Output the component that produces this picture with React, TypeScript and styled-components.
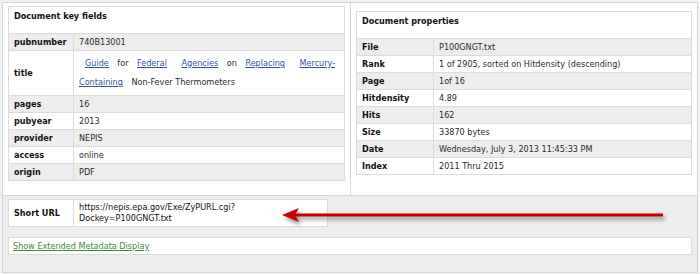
import styled, { createGlobalStyle } from "styled-components";

const GlobalStyle = createGlobalStyle`
  html, body {
    margin: 0;
    padding: 0;
    background: #f2f2f2;
  }
  body {
    font-family: "DejaVu Sans Condensed", "DejaVu Sans", sans-serif;
    font-size: 9px;
    color: #2b2b2b;
  }
`;

interface Row {
  label: string;
  value: React.ReactNode;
}

const Frame = styled.div`
  margin: 2px;
  width: 694px;
  border: 1px solid #d6d6d6;
  background: #ededed;
`;

const TopRow = styled.div`
  display: grid;
  grid-template-columns: 348px 1fr;
  height: 192px;
  background: #fff;
  border-bottom: 1px solid #d9d9d9;
`;

const Panel = styled.div<{ $padTop: number; $divider?: boolean }>`
  padding: ${({ $padTop }) => $padTop}px 5px 0;
  border-right: ${({ $divider }) => ($divider ? "1px solid #d9d9d9" : "none")};
`;

const Table = styled.table<{ $width: number }>`
  width: ${({ $width }) => $width}px;
  border-collapse: collapse;
  border: 1px solid #dcdcdc;
  background: #fff;
`;

const HeadCell = styled.td`
  height: 22px;
  padding: 4px 5px 0;
  vertical-align: top;
  font-weight: bold;
  color: #111;
  border: 1px solid #dcdcdc;
`;

const BodyRow = styled.tr<{ $shaded: boolean; $tall: boolean }>`
  background: ${({ $shaded }) => ($shaded ? "#ededed" : "#fff")};
  height: ${({ $tall }) => ($tall ? 44 : 16)}px;

  td {
    line-height: ${({ $tall }) => ($tall ? 19 : 16)}px;
    padding-top: ${({ $tall }) => ($tall ? 3 : 0)}px;
    padding-bottom: ${({ $tall }) => ($tall ? 3 : 0)}px;
  }
`;

const LabelCell = styled.td<{ $width: number }>`
  width: ${({ $width }) => $width - 10}px;
  padding: 0 5px;
  font-weight: bold;
  color: #111;
  white-space: nowrap;
  border: 1px solid #dcdcdc;
`;

const ValueCell = styled.td`
  padding: 0 5px;
  border: 1px solid #dcdcdc;
`;

const TitleLink = styled.a`
  margin: 0 6px;
  color: #2f5597;
  text-decoration: underline;
`;

const Bottom = styled.div`
  position: relative;
  padding: 3px 5px 17px;
`;

const UrlTable = styled.table`
  width: 320px;
  height: 28px;
  border-collapse: collapse;
  border: 1px solid #dcdcdc;
  background: #fff;
`;

const UrlCell = styled.td`
  padding: 0 5px;
  line-height: 11px;
  color: #111;
  border: 1px solid #dcdcdc;
`;

const ExtBox = styled.div`
  margin-top: 10px;
  height: 16px;
  padding: 0 4px;
  line-height: 16px;
  background: #fff;
  border: 1px solid #dcdcdc;
`;

const ExtLink = styled.a`
  color: #3b8b3b;
  text-decoration: underline;
`;

const Arrow = styled.svg`
  position: absolute;
  left: 275px;
  top: 8px;
  overflow: visible;
  filter: drop-shadow(2px 3px 2px rgba(0, 0, 0, 0.45));
`;

function keyRows(): Row[] {
  return [
    { label: "pubnumber", value: "740B13001" },
    {
      label: "title",
      value: (
        <>
          <TitleLink href="#">Guide</TitleLink> for <TitleLink href="#">Federal</TitleLink>{" "}
          <TitleLink href="#">Agencies</TitleLink> on <TitleLink href="#">Replacing</TitleLink>{" "}
          <TitleLink href="#">
            Mercury-
            <br />
            Containing
          </TitleLink>{" "}
          Non-Fever Thermometers
        </>
      )
    },
    { label: "pages", value: "16" },
    { label: "pubyear", value: "2013" },
    { label: "provider", value: "NEPIS" },
    { label: "access", value: "online" },
    { label: "origin", value: "PDF" }
  ];
}

const propRows: Row[] = [
  { label: "File", value: "P100GNGT.txt" },
  { label: "Rank", value: "1 of 2905, sorted on Hitdensity (descending)" },
  { label: "Page", value: "1of 16" },
  { label: "Hitdensity", value: "4.89" },
  { label: "Hits", value: "162" },
  { label: "Size", value: "33870 bytes" },
  { label: "Date", value: "Wednesday, July 3, 2013 11:45:33 PM" },
  { label: "Index", value: "2011 Thru 2015" }
];

function FieldTable({
  title,
  rows,
  width,
  labelWidth
}: {
  title: string;
  rows: Row[];
  width: number;
  labelWidth: number;
}) {
  return (
    <Table $width={width}>
      <tbody>
        <tr>
          <HeadCell colSpan={2}>{title}</HeadCell>
        </tr>
        {rows.map((row, i) => (
          <BodyRow key={row.label} $shaded={i % 2 === 0} $tall={row.label === "title"}>
            <LabelCell $width={labelWidth}>{row.label}</LabelCell>
            <ValueCell>{row.value}</ValueCell>
          </BodyRow>
        ))}
      </tbody>
    </Table>
  );
}

export default function App() {
  return (
    <>
      <GlobalStyle />
      <Frame>
        <TopRow>
          <Panel $padTop={3} $divider>
            <FieldTable title="Document key fields" rows={keyRows()} width={337} labelWidth={64} />
          </Panel>
          <Panel $padTop={8}>
            <FieldTable title="Document properties" rows={propRows} width={336} labelWidth={76} />
          </Panel>
        </TopRow>
        <Bottom>
          <UrlTable>
            <tbody>
              <tr>
                <LabelCell $width={64}>Short URL</LabelCell>
                <UrlCell>
                  https://nepis.epa.gov/Exe/ZyPURL.cgi?
                  <br />
                  Dockey=P100GNGT.txt
                </UrlCell>
              </tr>
            </tbody>
          </UrlTable>
          <ExtBox>
            <ExtLink href="#">Show Extended Metadata Display</ExtLink>
          </ExtBox>
          <Arrow width="400" height="34" viewBox="0 0 400 34">
            <rect x="16" y="9.5" width="369" height="3" fill="#c80000" />
            <path d="M4 11 L21 4 L17 11 L21 18 Z" fill="#c80000" />
          </Arrow>
        </Bottom>
      </Frame>
    </>
  );
}
